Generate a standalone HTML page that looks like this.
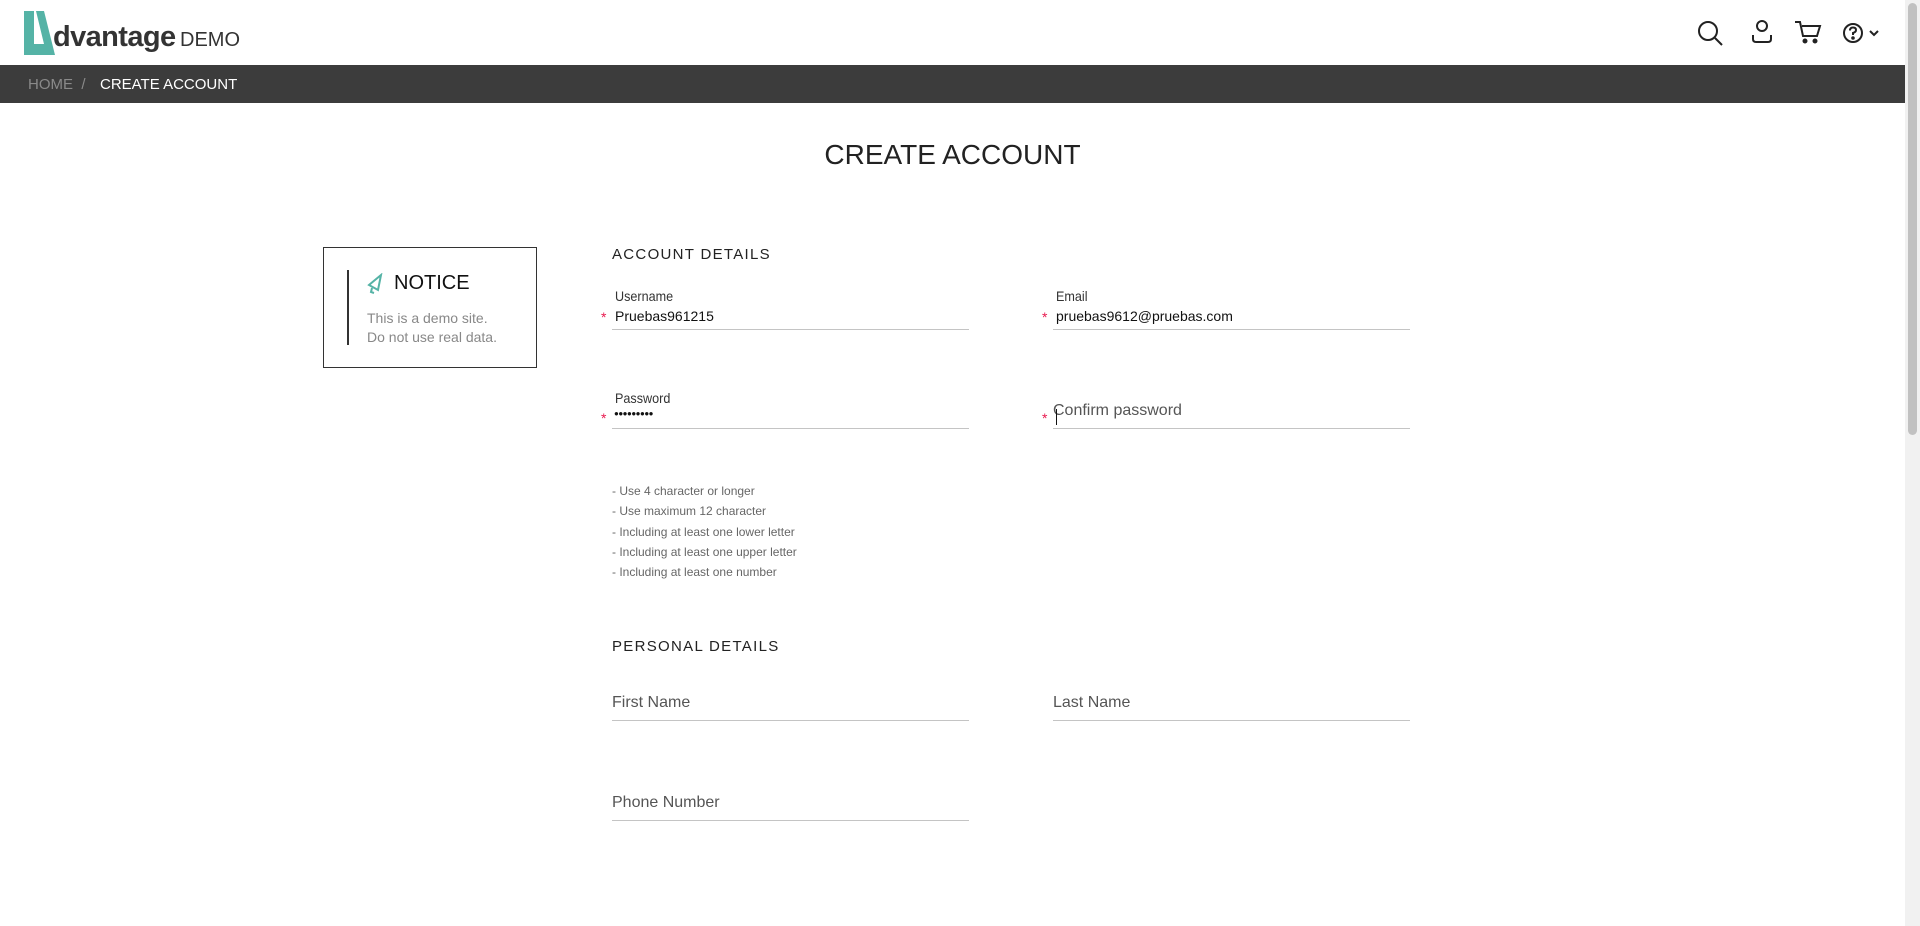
<!DOCTYPE html>
<html><head><meta charset="utf-8"><style>
*{margin:0;padding:0;box-sizing:border-box}
body{width:1920px;height:926px;overflow:hidden;background:#fff;font-family:"Liberation Sans",sans-serif;position:relative;color:#222}
.a{position:absolute;white-space:nowrap}
.hdr{position:absolute;left:0;top:0;width:1905px;height:65px;background:#fff}
.bc{position:absolute;left:0;top:65px;width:1905px;height:38px;background:#3c3c3c}
.sb{position:absolute;right:0;top:0;width:15px;height:926px;background:#f1f1f1}
.sb div{position:absolute;left:3px;top:3px;width:9px;height:432px;background:#c1c1c1;border-radius:5px}
.line{position:absolute;height:1px;background:#c4c4c4}
.lbl{font-size:14px;color:#333;transform:scaleX(.9);transform-origin:left}
.val{font-size:14px;color:#111}
.ast{color:#e8194e;font-size:14px}
.ph{font-size:16px;color:#555}
.hint{font-size:12px;color:#666}
.sec{font-size:15px;letter-spacing:1.3px;color:#222}
</style></head><body>
<div class="hdr"></div>
<svg class="a" style="left:22px;top:10px" width="36" height="46" viewBox="0 0 36 46"><path d="M2 1h10v33h10L14 1h8l11 44H2z" fill="#55b3a6"/></svg>
<div class="a" style="left:53px;top:21px;font-size:29px;font-weight:bold;color:#333;letter-spacing:-.6px">dvantage</div>
<div class="a" style="left:180px;top:29px;font-size:20px;color:#333">DEMO</div>
<svg class="a" style="left:1697px;top:20px" width="28" height="26" viewBox="0 0 28 26" fill="none" stroke="#222" stroke-width="2"><circle cx="11" cy="11" r="9"/><path d="M18 18l7 7"/></svg>
<svg class="a" style="left:1750px;top:19px" width="24" height="26" viewBox="0 0 24 26" fill="none" stroke="#222" stroke-width="2"><circle cx="12" cy="7" r="5"/><path d="M3 16v4q0 3 3 3h12q3 0 3-3v-4"/></svg>
<svg class="a" style="left:1794px;top:20px" width="28" height="24" viewBox="0 0 28 24" fill="none" stroke="#222" stroke-width="2"><path d="M1 2h5l3 14h14l3-10H8"/><circle cx="11" cy="21" r="1.5" fill="#222"/><circle cx="21" cy="21" r="1.5" fill="#222"/></svg>
<svg class="a" style="left:1842px;top:22px" width="42" height="22" viewBox="0 0 42 22" fill="none" stroke="#222" stroke-width="2"><circle cx="11" cy="11" r="9"/><path d="M8 8.5q0-3 3-3t3 2.5q0 2-3 3v2"/><circle cx="11" cy="16" r=".8" fill="#222"/><path d="M28 9l4 4 4-4"/></svg>
<div class="bc"></div>
<div class="a" style="left:28px;top:76px;font-size:15px;color:#8a8a8a">HOME&nbsp; /</div>
<div class="a" style="left:100px;top:76px;font-size:15px;color:#fff">CREATE ACCOUNT</div>
<div class="a" style="left:0;width:1905px;text-align:center;top:139px;font-size:28px;color:#222">CREATE ACCOUNT</div>

<div class="a" style="left:323px;top:247px;width:214px;height:121px;border:1px solid #333"></div>
<div class="a" style="left:347px;top:270px;width:2px;height:75px;background:#333"></div>
<svg class="a" style="left:366px;top:273px" width="20" height="22" viewBox="0 0 20 22" fill="none" stroke="#55b3a6" stroke-width="2"><path d="M15 2L3 12l9 5z"/><path d="M6 15l-1 4 3 1"/></svg>
<div class="a" style="left:394px;top:272px;font-size:20px;color:#111">NOTICE</div>
<div class="a" style="left:367px;top:309px;font-size:14px;color:#888;line-height:19px">This is a demo site.<br>Do not use real data.</div>

<div class="a sec" style="left:612px;top:246px">ACCOUNT DETAILS</div>
<div class="a lbl" style="left:615px;top:288px">Username</div>
<div class="a ast" style="left:601px;top:309px">*</div>
<div class="a val" style="left:615px;top:308px">Pruebas961215</div>
<div class="line" style="left:612px;top:329px;width:357px"></div>
<div class="a lbl" style="left:1056px;top:288px">Email</div>
<div class="a ast" style="left:1042px;top:309px">*</div>
<div class="a val" style="left:1056px;top:308px">pruebas9612@pruebas.com</div>
<div class="line" style="left:1053px;top:329px;width:357px"></div>

<div class="a lbl" style="left:615px;top:390px">Password</div>
<div class="a ast" style="left:601px;top:410px">*</div>
<div class="a val" style="left:614px;top:409px;font-size:8px;letter-spacing:-.5px">●●●●●●●●●</div>
<div class="line" style="left:612px;top:428px;width:357px"></div>
<div class="a ast" style="left:1042px;top:410px">*</div>
<div class="a ph" style="left:1053px;top:402px">Confirm password</div>
<div class="a" style="left:1056px;top:409px;width:1px;height:16px;background:#111"></div>
<div class="line" style="left:1053px;top:428px;width:357px"></div>

<div class="a hint" style="left:612px;top:481px;line-height:20.3px">- Use 4 character or longer<br>- Use maximum 12 character<br>- Including at least one lower letter<br>- Including at least one upper letter<br>- Including at least one number</div>

<div class="a sec" style="left:612px;top:638px">PERSONAL DETAILS</div>
<div class="a ph" style="left:612px;top:694px">First Name</div>
<div class="line" style="left:612px;top:720px;width:357px"></div>
<div class="a ph" style="left:1053px;top:694px">Last Name</div>
<div class="line" style="left:1053px;top:720px;width:357px"></div>
<div class="a ph" style="left:612px;top:794px">Phone Number</div>
<div class="line" style="left:612px;top:820px;width:357px"></div>
<div class="sb"><div></div></div>
</body></html>
